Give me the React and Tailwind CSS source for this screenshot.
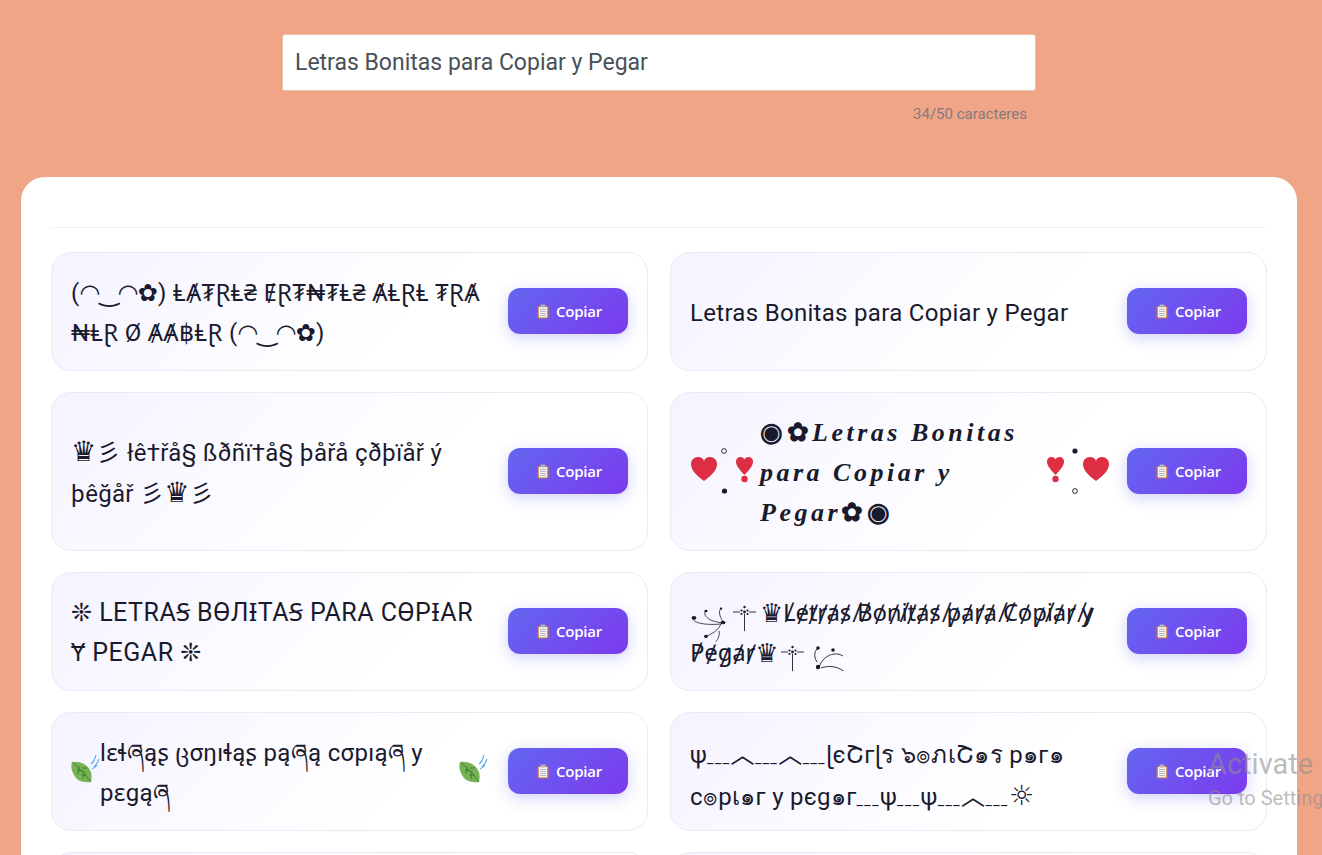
import React from 'react';

const Clipboard = () => (
  <svg width="12" height="15" viewBox="0 0 12 15" className="shrink-0">
    <rect x="0.5" y="2" width="11" height="12.5" rx="1" fill="#c9744f" />
    <rect x="1.8" y="3" width="8.4" height="10.4" fill="#f4f4f2" />
    <rect x="3.5" y="0.5" width="5" height="3" rx="0.8" fill="#aab4bc" />
    <path d="M3 5.5h6M3 7.5h6M3 9.5h6M3 11.5h6" stroke="#a9b3ba" strokeWidth="0.9" />
  </svg>
);

const Leaf = () => (
  <svg width="29" height="30" viewBox="0 0 29 30" className="shrink-0 -translate-y-[5px]">
    <path d="M1 9c6-1 14 1 18 8 2 3 2 8 1 12-8 1-15-1-18-9C0 16 0 12 1 9z" fill="#77b255" />
    <path d="M2 10c6 5 12 11 18 19M8 13l-1 8M13 18l-1 8M6 17l6 1M10 22l6 0M11 15l5 0" stroke="#3e7c2d" strokeWidth="0.9" fill="none" />
    <path d="M20 11c3-2 4-5 5-9M23 14c2-2 4-5 5-8M21 16c2-1 4-2 5-4" stroke="#5dadec" strokeWidth="1.1" fill="none" />
  </svg>
);

const heart = 'M13 37C5 31 0 26 0 20c0-4 3-7 7-7 3 0 5 1 6 4 1-3 3-4 6-4 4 0 7 3 7 7 0 6-5 11-13 17z';
const drop = 'M8.5 31C4 26 0 22 0 17.500c0-3 2-4.500 4.500-4.500 2 0 3.500 1 4 2.500.5-1.500 2-2.500 4-2.500 2.500 0 4.500 1.500 4.500 4.500 0 4.500-4 8.500-8.500 13.500z';

const HeartsLeft = () => (
  <svg width="63" height="54" viewBox="0 0 63 54" className="ml-px shrink-0 -translate-y-[2px]">
    <path d={heart} fill="#dd2e44" />
    <circle cx="33" cy="7" r="2.4" fill="none" stroke="#1a1a2e" strokeWidth="0.9" />
    <circle cx="33.500" cy="47" r="2.6" fill="#1a1a2e" />
    <g transform="translate(45 0)">
      <path d={drop} fill="#dd2e44" />
      <circle cx="8.500" cy="35" r="3.200" fill="#dd2e44" />
    </g>
  </svg>
);

const HeartsRight = () => (
  <svg width="63" height="54" viewBox="0 0 63 54" className="-mr-[2px] shrink-0 -translate-y-[2px]">
    <g transform="translate(1 0)">
      <path d={drop} fill="#dd2e44" />
      <circle cx="8.500" cy="35" r="3.200" fill="#dd2e44" />
    </g>
    <circle cx="29" cy="7" r="2.600" fill="#1a1a2e" />
    <circle cx="29" cy="47" r="2.400" fill="none" stroke="#1a1a2e" strokeWidth="0.9" />
    <g transform="translate(37 0)">
      <path d={heart} fill="#dd2e44" />
    </g>
  </svg>
);

const Cross = ({ x, y }) => (
  <g transform={`translate(${x} ${y})`} fill="#1a1a2e">
    <path d="M0 11h7M16 11h7M11.500 13v17" stroke="#1a1a2e" strokeWidth="0.9" fill="none" />
    <circle cx="11.500" cy="6" r="1.200" />
    <circle cx="8.500" cy="9.500" r="1.100" />
    <circle cx="14.500" cy="9.500" r="1.100" />
    <circle cx="11.500" cy="11" r="1.400" />
    <circle cx="8.500" cy="13" r="1.100" />
    <circle cx="14.500" cy="13" r="1.100" />
  </g>
);

const SwirlLeft = () => (
  <svg width="70" height="70" viewBox="0 0 70 70" className="shrink-0 -translate-y-[2px]">
    <g transform="translate(0 28) scale(1 0.77)">
      <g fill="none" stroke="#1a1a2e" strokeWidth="0.9">
        <path d="M3 18c-1 6 11 10 28 8" />
        <path d="M17 8c-4 2-3 10 6 14 3 1 6 2 10 3" />
        <path d="M32 6c-4 1-3 9 1 17" />
        <path d="M15 44c2-4 12-6 16-18" />
        <path d="M26 49c2-4 4-8 3-14" />
      </g>
      <g fill="#1a1a2e">
        <circle cx="4" cy="18" r="2.400" />
        <circle cx="16" cy="9" r="1.600" />
        <circle cx="31" cy="6" r="1.300" />
        <circle cx="33" cy="24" r="2.400" />
        <circle cx="16" cy="42" r="2" />
      </g>
    </g>
    <Cross x={43} y={25} />
  </svg>
);

const SwirlRight = () => (
  <svg width="66" height="40" viewBox="0 0 66 40" className="ml-[3px] shrink-0 -translate-y-[2px]">
    <Cross x={0} y={10} />
    <g fill="none" stroke="#1a1a2e" strokeWidth="0.9" transform="translate(0 7)">
      <path d="M36 24c-4-6-2-12 1-14" />
      <path d="M38 30c2-10 14-18 24-12" />
      <path d="M40 30c8-3 18-2 26 6" />
    </g>
    <g fill="#1a1a2e" transform="translate(0 11)">
      <circle cx="37" cy="6" r="1.800" />
      <circle cx="52" cy="8" r="1.800" />
      <circle cx="37" cy="25" r="2.200" />
    </g>
  </svg>
);

const Dashes = () => <span className="text-sm tracking-[1.5px]">___</span>;
const Peak = () => <span className="font-['Noto_Sans_CJK_SC',sans-serif]">︿</span>;

function CopyButton() {
  return (
    <button
      type="button"
      className="flex h-[46px] w-[120px] shrink-0 items-center justify-center gap-[7px] rounded-xl bg-[linear-gradient(135deg,#6366f1,#7c3aed)] pl-[3px] font-['Open_Sans',sans-serif] text-[15px] font-semibold tracking-[-0.2px] text-white shadow-[0_4px_15px_rgba(99,102,241,0.3)]"
    >
      <Clipboard />
      Copiar
    </button>
  );
}

function StyleCard({ children }) {
  return (
    <div className="flex items-center gap-5 rounded-[20px] border border-[#ebe9f5] bg-[linear-gradient(135deg,#f5f3ff_0%,#ffffff_60%)] px-[19px] pb-[19px] pt-[18px]">
      <div className="-mb-[2px] flex min-w-0 flex-1 items-center pt-[2px] text-2xl leading-10 tracking-[0.3px] text-[#1a1a2e]">{children}</div>
      <CopyButton />
    </div>
  );
}

export default function App() {
  return (
    <div className="relative h-screen overflow-hidden bg-[#f1a587] font-['Roboto','Open_Sans','Noto_Sans','DejaVu_Sans','Noto_Sans_CJK_SC',sans-serif]">
      <div className="ml-[282px] w-[754px] pt-[34px]">
        <input
          readOnly
          value="Letras Bonitas para Copiar y Pegar"
          className="h-[57px] w-full rounded-[3px] border border-[#e8c3b4] bg-white px-3 font-['Roboto',sans-serif] text-[23px] text-[#495057] outline-none"
        />
        <p className="mt-[13px] pr-[9px] text-right font-['Roboto',sans-serif] text-[15px] leading-5 text-[#857a7c]">34/50 caracteres</p>
      </div>

      <main className="ml-[21px] mr-[25px] mt-[53px] rounded-t-3xl bg-white px-[30px] pt-[50px]">
        <hr className="mb-6 border-[#f3f3f7]" />
        <div className="grid grid-cols-2 gap-x-[22px] gap-y-[21px]">
          <StyleCard>
            <p>
              (<span className="font-['DejaVu_Sans',sans-serif] tracking-[-1px]">◠‿◠</span>✿) ⱠȺ₮ⱤⱠ₴ ɆⱤ₮₦₮Ⱡ₴ ȺⱠⱤⱠ ₮ⱤȺ ₦ⱠⱤ Ø ȺȺ฿ⱠⱤ (
              <span className="font-['DejaVu_Sans',sans-serif] tracking-[-1px]">◠‿◠</span>✿)
            </p>
          </StyleCard>
          <StyleCard>
            <p>Letras Bonitas para Copiar y Pegar</p>
          </StyleCard>
          <StyleCard>
            <p>
              <span className="text-[28px]">♛</span>彡 łê†řå§ ßðñï†å§ þåřå çðþïåř ý þêğåř 彡<span className="text-[28px]">♛</span>彡
            </p>
          </StyleCard>
          <StyleCard>
            <HeartsLeft />
            <p className="ml-[6px] flex-1 font-['Liberation_Serif',serif] text-[26px] font-bold italic tracking-[3.5px]">
              <span className="not-italic">◉✿</span>Letras Bonitas para Copiar y Pegar<span className="not-italic">✿◉</span>
            </p>
            <HeartsRight />
          </StyleCard>
          <StyleCard>
            <p className="text-[25px] tracking-[0.5px]">
              ❊ LETRAꞨ BӨЛƗTAꞨ PARA CӨPƗAR
              <br />
              Ɏ PEGAR ❊
            </p>
          </StyleCard>
          <StyleCard>
            <div className="whitespace-nowrap tracking-[-0.2px]">
              <p className="flex h-10 items-center">
                <SwirlLeft />
                <span className="text-[26px]">♛</span>
                <span>L̸e̸t̸r̸a̸s̸ ̸B̸o̸n̸i̸t̸a̸s̸ ̸p̸a̸r̸a̸ ̸C̸o̸p̸i̸a̸r̸ ̸y̸</span>
              </p>
              <p className="flex h-10 items-center">
                <span>P̸e̸g̸a̸r̸</span>
                <span className="text-[26px]">♛</span>
                <SwirlRight />
              </p>
            </div>
          </StyleCard>
          <StyleCard>
            <Leaf />
            <p className="h-20 flex-1">lɛɬཞąʂ ცσŋıɬąʂ pąཞą cσpıąཞ y pɛgąཞ</p>
            <Leaf />
          </StyleCard>
          <StyleCard>
            <p className="h-20">
              ψ<Dashes /><Peak /><Dashes /><Peak /><Dashes />ɭєՇгɭร ๖๏ภเՇ๑ร p๑г๑ c๏pเ๑г y pєg๑г<Dashes />ψ<Dashes />ψ<Dashes /><Peak /><Dashes />
              <span className="text-[28px]">☼</span>
            </p>
          </StyleCard>
          <StyleCard>
            <p>Letras Bonitas</p>
          </StyleCard>
          <StyleCard>
            <p>Letras Bonitas</p>
          </StyleCard>
        </div>
      </main>

      <div className="pointer-events-none absolute left-[1208px] top-[746px] whitespace-nowrap text-[#8f8f8f]/60">
        <p className="text-[29px] leading-9">Activate</p>
        <p className="text-xl leading-8">Go to Settings</p>
      </div>
    </div>
  );
}
